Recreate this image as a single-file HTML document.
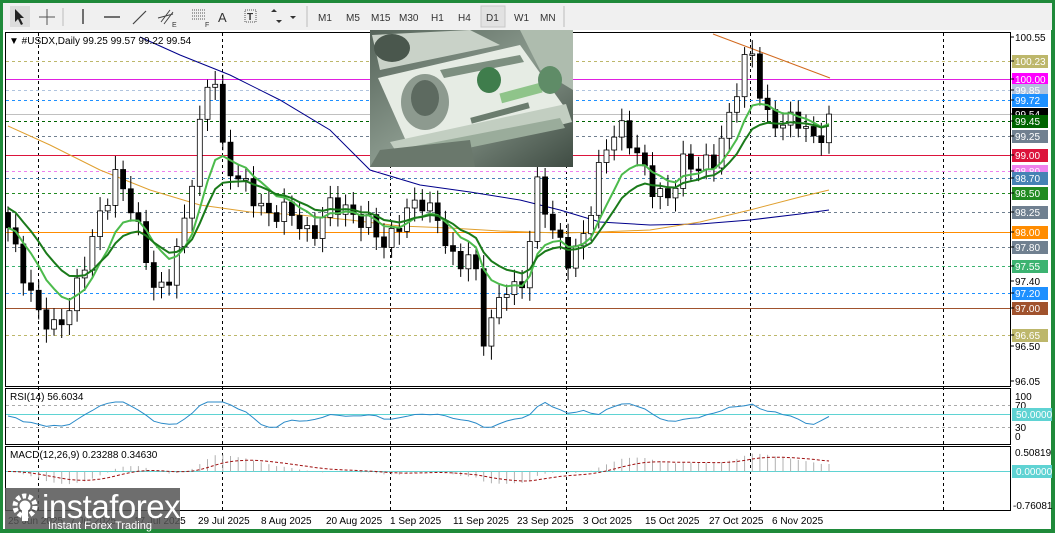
<!DOCTYPE html>
<html><head><meta charset="utf-8"><style>
html,body{margin:0;padding:0;width:1055px;height:533px;overflow:hidden;background:#1f8a3a;}
svg{display:block;font-family:"Liberation Sans",sans-serif;}
</style></head><body>
<svg id="s" width="1055" height="533" xmlns="http://www.w3.org/2000/svg">
<rect x="0" y="0" width="1055" height="533" fill="#1f8a3a"/>
<rect x="3" y="3" width="1049" height="27" fill="#f0f0f0"/>
<rect x="3" y="30" width="1048" height="499" fill="#fff"/>
<g fill="#333" font-size="10">
<rect x="10" y="6" width="20" height="21" fill="#dcdcdc"/>
<path d="M15 9 L15 22 L18 19 L21 25 L23 24 L20 18 L24 18 Z" fill="#222"/>
<path d="M47 9 V25 M39 17 H55" stroke="#555" stroke-width="1"/>
<line x1="63" y1="8" x2="63" y2="26" stroke="#bbb"/>
<line x1="83" y1="9" x2="83" y2="24" stroke="#444" stroke-width="1.5"/>
<line x1="104" y1="17" x2="120" y2="17" stroke="#444" stroke-width="1.5"/>
<line x1="133" y1="24" x2="146" y2="11" stroke="#444" stroke-width="1.2"/>
<path d="M161 22 L170 10 M164 24 L173 12 M158 18 L173 14" stroke="#444" stroke-width="1"/>
<text x="172" y="27" font-size="7">E</text>
<path d="M192 10 H206 M192 13 H206 M192 16 H206 M192 19 H206" stroke="#555" stroke-dasharray="1 1"/>
<text x="205" y="27" font-size="7">F</text>
<text x="218" y="22" font-size="13">A</text>
<rect x="245" y="10" width="11" height="12" fill="none" stroke="#555" stroke-dasharray="1 1"/>
<text x="247" y="20" font-size="10" font-weight="bold">T</text>
<path d="M271 12 l3 -3 l3 3 z M276 20 l3 3 l3 -3 z" fill="#333"/>
<path d="M290 16 l3 3 l3 -3 z" fill="#333"/>
<line x1="307" y1="6" x2="307" y2="27" stroke="#bbb"/>
<text x="318" y="21">M1</text><text x="346" y="21">M5</text><text x="371" y="21">M15</text><text x="399" y="21">M30</text><text x="431" y="21">H1</text><text x="458" y="21">H4</text>
<rect x="481" y="6" width="24" height="21" fill="#e2e2e2" stroke="#c8c8c8"/>
<text x="486" y="21">D1</text><text x="514" y="21">W1</text><text x="540" y="21">MN</text>
<line x1="564" y1="6" x2="564" y2="27" stroke="#bbb"/>
</g>
<g id="chart"></g>
</svg>
<script>
var s=document.getElementById('chart');var h='';
function Y(p){return 37+(100.55-p)*76.3;}
h+='<rect x="5.5" y="32.5" width="1005" height="354" fill="none" stroke="#000"/>';
h+='<rect x="5.5" y="388.5" width="1005" height="56" fill="none" stroke="#000"/>';
h+='<rect x="5.5" y="446.5" width="1005" height="64" fill="none" stroke="#000"/>';
[38,222,390,566,750,943].forEach(function(x){h+='<line x1="'+x+'.5" y1="33" x2="'+x+'.5" y2="510" stroke="#000" stroke-dasharray="3 3"/>';});
var L=[[100.23,'#bdb76b',1,'100.23'],[100.00,'#e020e0',0,'100.00'],[99.85,'#b0c4de',1,'99.85'],[99.72,'#1e90ff',1,'99.72'],[99.54,'#c0c0c0',0,'99.54'],[99.45,'#006400',1,'99.45'],[99.25,'#708090',1,'99.25'],[99.00,'#dc143c',0,'99.00'],[98.80,'#ee82ee',1,'98.80'],[98.70,'#4682b4',1,'98.70'],[98.50,'#228b22',1,'98.50'],[98.25,'#708090',1,'98.25'],[98.00,'#ff8c00',0,'98.00'],[97.80,'#708090',1,'97.80'],[97.55,'#3cb371',1,'97.55'],[97.20,'#1e90ff',1,'97.20'],[97.00,'#a0522d',0,'97.00'],[96.65,'#bdb76b',1,'96.65']];
L.forEach(function(l){var y=Math.round(Y(l[0]))+0.5;h+='<line x1="6" y1="'+y+'" x2="1010" y2="'+y+'" stroke="'+l[1]+'" '+(l[2]?'stroke-dasharray="3 3"':'')+'/>';});
h+='<polyline fill="none" stroke="#00008b" stroke-width="1" points="140,37 180,55 230,75 280,100 330,130 370,170 420,185 470,192 520,200 560,210 600,222 650,225 700,224 750,220 800,214 829,210"/>';
h+='<polyline fill="none" stroke="#e0a030" stroke-width="1" points="8,126 50,145 100,170 150,190 200,205 250,212 300,215 350,220 400,226 450,228 500,231 560,233 600,232 650,230 700,222 750,210 800,197 829,190"/>';
h+='<line x1="713" y1="34" x2="830" y2="78" stroke="#d2691e"/>';
var K=[[0,98.05],[4,97.2],[6,96.9],[9,96.7],[12,97.1],[16,98.0],[20,98.75],[23,98.3],[27,97.3],[29,97.2],[33,98.2],[36,99.6],[38,100.25],[40,98.9],[44,98.6],[48,98.2],[52,98.3],[56,97.9],[60,98.4],[64,98.2],[67,98.1],[70,97.8],[74,98.3],[77,98.4],[80,98.1],[83,97.5],[86,97.8],[88,96.6],[90,96.9],[92,97.3],[95,97.2],[98,98.6],[101,98.0],[104,97.6],[107,98.0],[110,99.0],[113,99.4],[116,99.1],[119,98.6],[122,98.4],[125,98.9],[128,98.85],[131,98.95],[134,99.6],[136,100.2],[138,100.35],[140,99.5],[143,99.4],[146,99.5],[149,99.2],[151,99.3],[152,99.54]];
var N=108,C=[];
for(var i=0;i<N;i++){var t=i/(N-1)*152;var j=0;while(j<K.length-2&&K[j+1][0]<t)j++;var a=K[j],b=K[j+1];var f=(t-a[0])/(b[0]-a[0]);f=Math.max(0,Math.min(1,f));C.push(a[1]+(b[1]-a[1])*f+0.12*Math.sin(i*2.3));}
C[N-1]=99.54;
var e1=[],e2=[],x0=8,dx=(829-8)/(N-1),k1=2/9,k2=2/15,p1=C[0],p2=C[0]+0.3;
for(var i=0;i<N;i++){var x=x0+i*dx,c=C[i],o=i?C[i-1]:c+0.2;var hi=Math.max(o,c)+0.08+0.1*Math.abs(Math.sin(i*1.7)),lo=Math.min(o,c)-0.08-0.1*Math.abs(Math.cos(i*1.3));
h+='<line x1="'+x.toFixed(1)+'" y1="'+Y(hi).toFixed(1)+'" x2="'+x.toFixed(1)+'" y2="'+Y(lo).toFixed(1)+'" stroke="#000"/>';
var yt=Y(Math.max(o,c)),yb=Y(Math.min(o,c));if(yb-yt<1.5)yb=yt+1.5;
h+='<rect x="'+(x-2.5).toFixed(1)+'" y="'+yt.toFixed(1)+'" width="5" height="'+(yb-yt).toFixed(1)+'" fill="'+(c>=o?'#fff':'#000')+'" stroke="#000" stroke-width="0.8"/>';
p1=p1+(c-p1)*k1;p2=p2+(c-p2)*k2;e1.push(x.toFixed(1)+','+Y(p1).toFixed(1));e2.push(x.toFixed(1)+','+Y(p2).toFixed(1));}
h+='<polyline fill="none" stroke="#4cbb4c" stroke-width="2" points="'+e1.join(' ')+'"/>';
h+='<polyline fill="none" stroke="#1a7a1a" stroke-width="2" points="'+e2.join(' ')+'"/>';
// photo
h+='<defs><linearGradient id="g" x1="0" y1="0" x2="1" y2="1"><stop offset="0" stop-color="#56645a"/><stop offset="0.5" stop-color="#8a998d"/><stop offset="1" stop-color="#3f4c43"/></linearGradient></defs>';
h+='<rect x="370" y="30" width="203" height="137" fill="url(#g)"/>';
h+='<polygon points="372,35 470,30 500,45 380,70" fill="#c9d2c8"/><polygon points="520,30 573,30 573,90 540,70" fill="#aebcae"/>';
h+='<polygon points="378,78 520,45 568,112 410,150" fill="#e6ece4"/>';
h+='<polygon points="390,142 566,104 572,122 404,164" fill="#c2cec1"/><polygon points="395,150 560,118 565,128 410,160" fill="#9aac9b"/>';
h+='<polygon points="440,70 520,55 524,62 444,78" fill="#7d8f80"/>';
h+='<ellipse cx="425" cy="102" rx="24" ry="28" fill="#8d9a8f"/><ellipse cx="425" cy="98" rx="14" ry="18" fill="#5d6a60"/>';
h+='<ellipse cx="489" cy="80" rx="12" ry="13" fill="#3f7d4c"/><rect x="500" y="88" width="42" height="10" fill="#8fc48a" transform="rotate(-15 521 93)"/>';
h+='<rect x="470" y="110" width="60" height="6" fill="#6b7c6e" transform="rotate(-15 500 113)"/>';
h+='<ellipse cx="392" cy="48" rx="18" ry="14" fill="#4a574d"/><ellipse cx="550" cy="80" rx="12" ry="14" fill="#5f8c67"/>';
h+='<polygon points="380,150 470,140 475,167 370,167" fill="#6a786c"/>';
function lbl(y,t,bg,fg){y=Math.round(y);if(bg)h+='<rect x="1012" y="'+(y-6)+'" width="36" height="13" fill="'+bg+'"/>';h+='<line x1="1011" y1="'+y+'" x2="1014" y2="'+y+'" stroke="#000"/><text x="1015" y="'+(y+4)+'" font-size="10" fill="'+(fg||'#000')+'">'+t+'</text>';}
lbl(37,'100.55');lbl(281,'97.40');lbl(346,'96.50');lbl(381,'96.05');
var bgs={'100.23':'#bdb76b','100.00':'#ff00ff','99.85':'#b0c4de','99.72':'#1e90ff','99.54':'#000','99.45':'#006400','99.25':'#708090','99.00':'#dc143c','98.80':'#ee82ee','98.70':'#4682b4','98.50':'#228b22','98.25':'#708090','98.00':'#ff8c00','97.80':'#708090','97.55':'#3cb371','97.20':'#1e90ff','97.00':'#a0522d','96.65':'#bdb76b'};
L.forEach(function(l){lbl(Y(l[0]),l[3],bgs[l[3]],'#fff');});
h+='<text x="9" y="44" font-size="10" fill="#000">&#9660; #USDX,Daily  99.25 99.57 99.22 99.54</text>';
h+='<line x1="6" y1="405.5" x2="1010" y2="405.5" stroke="#aaa" stroke-dasharray="3 3"/><line x1="6" y1="427.5" x2="1010" y2="427.5" stroke="#aaa" stroke-dasharray="3 3"/><line x1="6" y1="414.5" x2="1010" y2="414.5" stroke="#5fd3d3"/>';
var r=[];for(var i=0;i<N;i++){var x=x0+i*dx;var v=50+(C[i]-(i?C[Math.max(0,i-8)]:C[0]))*14;v=Math.max(30,Math.min(75,v));r.push(x.toFixed(1)+','+(444-v*0.56).toFixed(1));}
h+='<polyline fill="none" stroke="#2a8ac8" points="'+r.join(' ')+'"/>';
h+='<text x="10" y="400" font-size="10">RSI(14) 56.6034</text>';
[[396,'100'],[405,'70'],[427,'30'],[436,'0']].forEach(function(a){h+='<text x="1015" y="'+(a[0]+4)+'" font-size="10">'+a[1]+'</text>';});
h+='<rect x="1012" y="408" width="40" height="13" fill="#5fd3d3"/><text x="1016" y="418" font-size="10" fill="#fff">50.0000</text>';
var z=471.5;h+='<line x1="6" y1="'+z+'" x2="1010" y2="'+z+'" stroke="#5fd3d3"/>';
var sg=[],sv=0;
var a12=C[0],a26=C[0];for(var i=0;i<N;i++){var x=x0+i*dx;a12+=(C[i]-a12)*2/13;a26+=(C[i]-a26)*2/27;var m=(a12-a26);sv+=(m-sv)*0.2;var ym=z-m*40;h+='<line x1="'+x.toFixed(1)+'" y1="'+z+'" x2="'+x.toFixed(1)+'" y2="'+ym.toFixed(1)+'" stroke="#b0b0b0"/>';sg.push(x.toFixed(1)+','+(z-sv*40).toFixed(1));}
h+='<polyline fill="none" stroke="#a01010" stroke-dasharray="3 2" points="'+sg.join(' ')+'"/>';
h+='<text x="10" y="458" font-size="10">MACD(12,26,9) 0.23288 0.34630</text>';
h+='<text x="1015" y="456" font-size="10">0.50819</text><text x="1013" y="509" font-size="10">-0.76081</text>';
h+='<rect x="1012" y="465" width="40" height="13" fill="#5fd3d3"/><text x="1016" y="475" font-size="10" fill="#fff">0.00000</text>';
[[8,'25 Jun 2025'],[70,'7 Jul 2025'],[134,'17 Jul 2025'],[198,'29 Jul 2025'],[261,'8 Aug 2025'],[326,'20 Aug 2025'],[390,'1 Sep 2025'],[453,'11 Sep 2025'],[517,'23 Sep 2025'],[583,'3 Oct 2025'],[645,'15 Oct 2025'],[709,'27 Oct 2025'],[772,'6 Nov 2025']].forEach(function(d){h+='<text x="'+d[0]+'" y="524" font-size="10">'+d[1]+'</text>';});
h+='<rect x="5" y="488" width="175" height="41" fill="#555" fill-opacity="0.85"/>';
h+='<circle cx="25" cy="506" r="10" fill="none" stroke="#fff" stroke-width="5" stroke-dasharray="4 2.3"/><circle cx="25" cy="506" r="5.5" fill="#fff"/><rect x="22" y="506" width="6" height="15" fill="#fff"/>';
h+='<text x="42" y="518" font-size="33" fill="#fff" letter-spacing="-0.5">instaforex</text>';
h+='<text x="48" y="529" font-size="11" fill="#fff">Instant Forex Trading</text>';
s.innerHTML=h;
</script>
</body></html>
